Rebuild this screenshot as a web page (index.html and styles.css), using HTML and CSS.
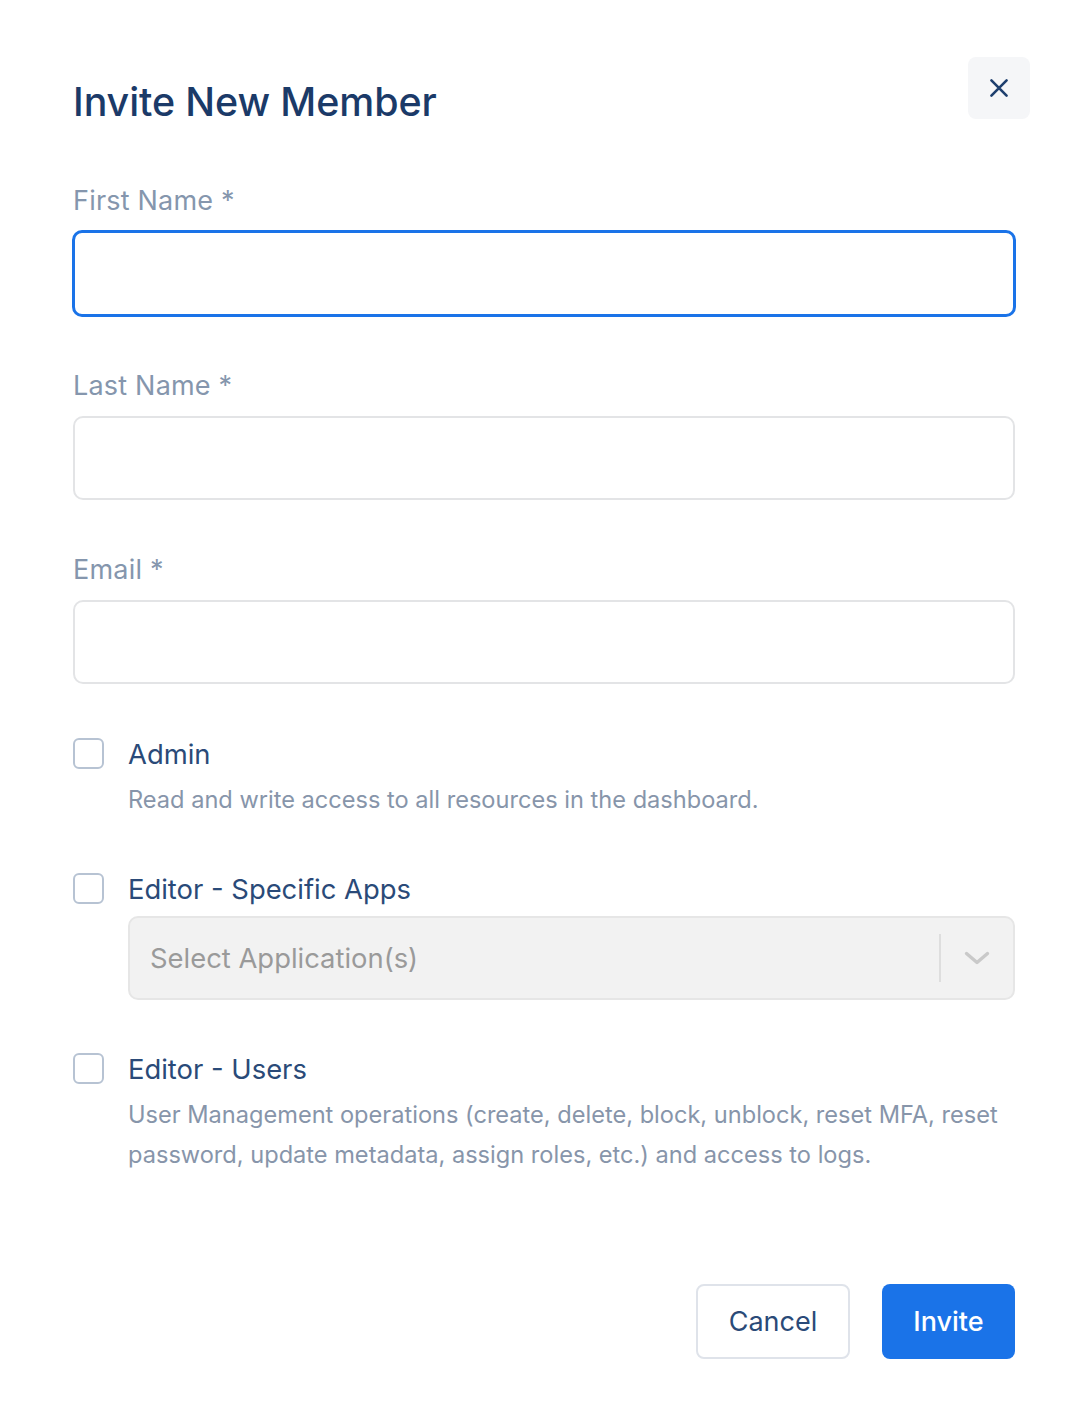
FILE: index.html
```html
<!DOCTYPE html>
<html>
<head>
<meta charset="utf-8">
<link rel="stylesheet" href="styles.css">
</head>
<body>
<div class="modal">
  <div class="header">
    <h1 class="title">Invite New Member</h1>
    <button class="close" aria-label="Close">
      <svg width="26" height="26" viewBox="0 0 24 24"><path d="M5 5L19 19M19 5L5 19" stroke="#1e3f6e" stroke-width="2.4" stroke-linecap="round" fill="none"/></svg>
    </button>
  </div>
  <div class="fields">
    <div class="field">
      <label class="label">First Name *</label>
      <div class="input focused"></div>
    </div>
    <div class="field">
      <label class="label">Last Name *</label>
      <div class="input"></div>
    </div>
    <div class="field">
      <label class="label">Email *</label>
      <div class="input"></div>
    </div>
  </div>
  <div class="option">
    <span class="checkbox"></span>
    <div class="opt-body">
      <div class="opt-title">Admin</div>
      <div class="opt-desc">Read and write access to all resources in the dashboard.</div>
    </div>
  </div>
  <div class="option">
    <span class="checkbox"></span>
    <div class="opt-body">
      <div class="opt-title">Editor - Specific Apps</div>
      <div class="select">
        <span class="select-text">Select Application(s)</span>
        <span class="select-sep"></span>
        <span class="select-arrow">
          <svg width="30" height="30" viewBox="0 0 30 30"><path d="M4.5 10.5L15 19.5L25.5 10.5" stroke="#c9c9c9" stroke-width="3.4" stroke-linecap="round" stroke-linejoin="round" fill="none"/></svg>
        </span>
      </div>
    </div>
  </div>
  <div class="option">
    <span class="checkbox"></span>
    <div class="opt-body">
      <div class="opt-title">Editor - Users</div>
      <div class="opt-desc">User Management operations (create, delete, block, unblock, reset MFA, reset password, update metadata, assign roles, etc.) and access to logs.</div>
    </div>
  </div>
  <div class="footer">
    <button class="btn btn-cancel">Cancel</button>
    <button class="btn btn-invite">Invite</button>
  </div>
</div>
</body>
</html>
```
FILE: styles.css
```css
* { box-sizing: border-box; }
html, body { margin: 0; padding: 0; background: #ffffff; }
body { font-family: Inter, "Noto Sans", sans-serif; }
.modal {
  width: 1080px;
  height: 1416px;
  padding: 57px 65px 0 73px;
}
.header {
  display: flex;
  justify-content: space-between;
  align-items: flex-start;
}
.title {
  margin: 22px 0 0 0;
  font-size: 39.4px;
  font-weight: 500;
  color: #1b3a68;
  line-height: 46px;
  letter-spacing: -0.1px;
}
.close {
  width: 62px;
  height: 62px;
  margin-right: -15px;
  border: none;
  border-radius: 8px;
  background: #f5f6f8;
  display: flex;
  align-items: center;
  justify-content: center;
  padding: 0;
}
.fields { padding-top: 60px; }
.label {
  display: block;
  font-size: 27px;
  letter-spacing: 0.2px;
  color: #8596ad;
  line-height: 32px;
}
.input {
  margin-top: 14px;
  height: 84px;
  border: 2px solid #e3e4e6;
  border-radius: 10px;
  margin-bottom: 54px;
}
.input.focused {
  border: 3px solid #1a73e8;
  height: 87px;
  margin-left: -1px;
  margin-right: -1px;
  margin-top: 13px;
  margin-bottom: 53px;
}
.option {
  display: flex;
  align-items: flex-start;
  gap: 24px;
  margin-bottom: 53px;
}
.checkbox {
  flex: none;
  width: 31px;
  height: 31px;
  border: 2px solid #b7c3d3;
  border-radius: 6px;
}
.opt-body { flex: 1; }
.opt-title {
  font-size: 27.4px;
  color: #2a4a78;
  line-height: 32px;
}
.opt-desc {
  margin-top: 10px;
  font-size: 23.6px;
  color: #8795aa;
  line-height: 40px;
}
.select {
  margin-top: 11px;
  height: 84px;
  background: #f2f2f2;
  border: 2px solid #e6e6e6;
  border-radius: 10px;
  display: flex;
  align-items: center;
  padding-left: 20px;
}
.select-text {
  flex: 1;
  font-size: 27.4px;
  color: #9a9a9a;
}
.select-sep {
  width: 2px;
  height: 48px;
  background: #dedede;
}
.select-arrow {
  width: 72px;
  display: flex;
  justify-content: center;
  align-items: center;
}
.footer {
  display: flex;
  justify-content: flex-end;
  gap: 32px;
  margin-top: 109px;
}
.btn {
  height: 75px;
  border-radius: 8px;
  font-family: Inter, "Noto Sans", sans-serif;
  font-size: 27px;
  padding: 0;
}
.btn-cancel {
  width: 154px;
  background: #ffffff;
  border: 2px solid #dfe3ea;
  color: #2a4a78;
}
.btn-invite {
  width: 133px;
  background: #1a73e8;
  border: none;
  color: #ffffff;
  font-weight: 500;
}
```
